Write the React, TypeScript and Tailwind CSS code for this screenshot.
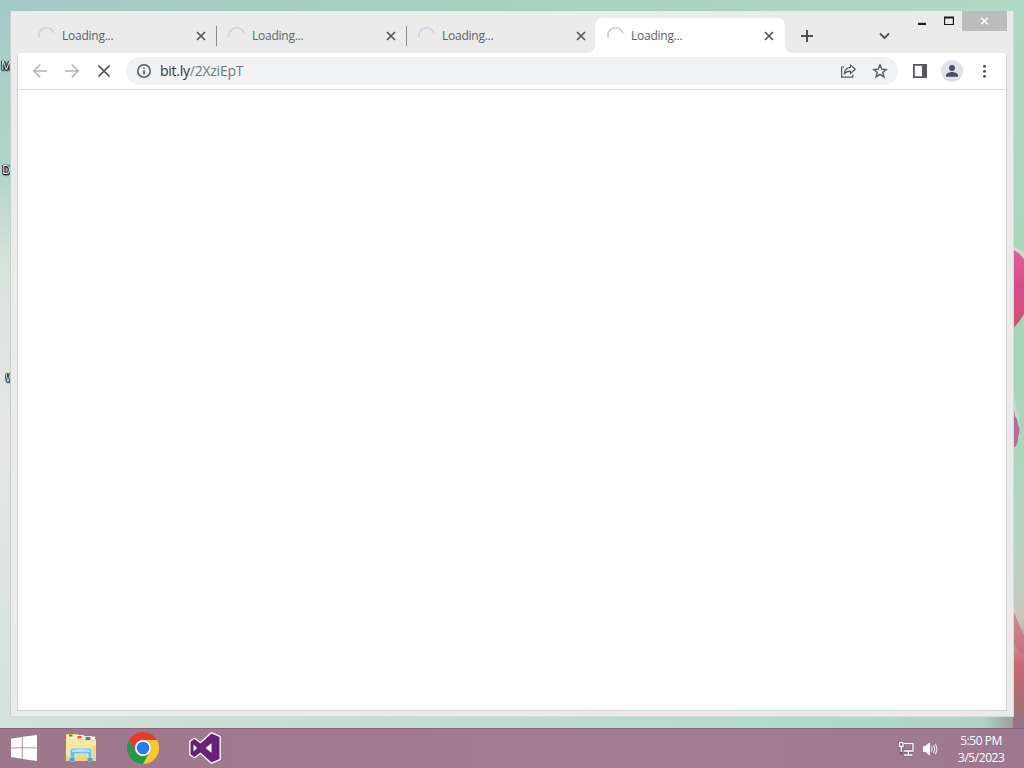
import React from "react";

function Spinner({ active = false }: { active?: boolean }) {
  return (
    <svg className="h-[18px] w-[18px] shrink-0" viewBox="0 0 18 18" fill="none">
      <path d="M1.3 10.8A7.6 7.6 0 0 1 15.8 6" stroke={active ? "#c9cdd5" : "#ccd6e6"} strokeWidth="1.7" />
    </svg>
  );
}

function Cross({ className, width = 1.6 }: { className: string; width?: number }) {
  return (
    <svg className={className} viewBox="0 0 10 10" fill="none" stroke="currentColor" strokeWidth={width}>
      <path d="M1 1 9 9M9 1 1 9" />
    </svg>
  );
}

function Tab({ active = false, divider = false }: { active?: boolean; divider?: boolean }) {
  return (
    <div
      className={
        active
          ? "relative flex h-[35px] w-[190px] shrink-0 items-center rounded-t-lg bg-white pl-[12px] pr-[11px]"
          : "relative flex h-[35px] w-[190px] shrink-0 items-center pl-[11px] pr-[11px]"
      }
    >
      {active && (
        <>
          <svg className="absolute -left-2 bottom-0 h-2 w-2" viewBox="0 0 8 8">
            <path d="M8 0v8H0a8 8 0 0 0 8-8" fill="#fff" />
          </svg>
          <svg className="absolute -right-2 bottom-0 h-2 w-2" viewBox="0 0 8 8">
            <path d="M0 0v8h8a8 8 0 0 1-8-8" fill="#fff" />
          </svg>
        </>
      )}
      <Spinner active={active} />
      <span className="ml-[6px] flex-1 text-[12px] leading-4 tracking-[-0.25px] text-[#616264]">Loading...</span>
      <Cross className="h-[10px] w-[10px] text-[#505255]" />
      {divider && <i className="absolute right-0 top-[8px] h-5 w-px bg-[#8b8b8c]" />}
    </div>
  );
}

function WindowButtons() {
  return (
    <div className="ml-auto flex h-5 items-start text-[#1b1b1b]">
      <svg className="h-5 w-[54px]" viewBox="0 0 54 20" fill="none">
        <path d="M10 12.9h8" stroke="currentColor" strokeWidth="2.2" />
        <path d="M36.6 6.5h8.8v7h-8.8z" stroke="currentColor" strokeWidth="1.2" />
        <path d="M36 6.5h10" stroke="currentColor" strokeWidth="2" />
      </svg>
      <div className="flex h-5 w-[45px] items-center justify-center bg-[#bcbcbc] text-white">
        <Cross className="h-2 w-[9px]" width={2} />
      </div>
    </div>
  );
}

function Toolbar() {
  return (
    <div className="flex h-[37px] items-center border-b border-[#dcdcdd] bg-white pl-[14px] pr-[14px] text-[#56585b]">
      <svg className="h-4 w-4" viewBox="0 0 16 16" fill="none" stroke="#b5b6b8" strokeWidth="1.7">
        <path d="M15 8H2M8.3 1.5 1.8 8l6.5 6.5" />
      </svg>
      <svg className="ml-4 h-4 w-4" viewBox="0 0 16 16" fill="none" stroke="#b5b6b8" strokeWidth="1.7">
        <path d="M1 8h13M7.7 1.5 14.2 8l-6.5 6.5" />
      </svg>
      <Cross className="ml-[17px] h-[14px] w-[14px]" width={1.2} />
      <div className="ml-[15px] flex h-7 w-[772px] items-center rounded-full bg-[#f1f2f3] pl-[11px] pr-[10px]">
        <svg className="h-[14px] w-[14px]" viewBox="0 0 14 14" fill="none" stroke="currentColor">
          <circle cx="7" cy="7" r="6.2" strokeWidth="1.5" />
          <path d="M7 6.2v4.3M7 3.3v1.5" strokeWidth="1.6" />
        </svg>
        <span className="ml-[9px] flex-1 text-[14px] leading-5 tracking-[-0.25px] text-[#75777a]">
          <span className="text-[#303235]">bit.ly</span>/2XziEpT
        </span>
        <svg className="h-4 w-4" viewBox="0 0 16 16" fill="none" stroke="currentColor" strokeWidth="1.2" strokeLinejoin="round">
          <path d="M4 4H1.6v10.2h11.2v-2.8" />
          <path d="M10.4 1.9 15.3 6.2l-4.9 4.3V8.1C7.6 8 5.8 8.8 4.3 10.9 4.6 7.3 6.7 4.8 10.4 4.4z" />
        </svg>
        <svg className="ml-4 h-4 w-4" viewBox="0 0 16 16" fill="none" stroke="currentColor" strokeWidth="1.4">
          <path d="m8 2 1.75 4.1 4.45.4-3.4 2.9 1.05 4.35L8 11.4l-3.85 2.35L5.2 9.4 1.8 6.5l4.45-.4z" />
        </svg>
      </div>
      <svg className="ml-[14px] h-[14px] w-4" viewBox="0 0 16 14">
        <path d="M1.9.9h12.2v12.2H1.9z" fill="none" stroke="currentColor" strokeWidth="1.8" />
        <path d="M10 0h5v14h-5z" fill="currentColor" />
      </svg>
      <svg className="ml-[13px] h-[22px] w-[22px]" viewBox="0 0 22 22">
        <circle cx="11" cy="11" r="11" fill="#e0e2eb" />
        <circle cx="11" cy="8" r="3" fill="#4b5068" />
        <path d="M5 16.8v-1.6c0-2.2 4-3.2 6-3.2s6 1 6 3.2v1.6z" fill="#4b5068" />
      </svg>
      <svg className="ml-[19px] h-[14px] w-[5px]" viewBox="0 0 5 14" fill="currentColor">
        <circle cx="2.5" cy="2.2" r="1.5" />
        <circle cx="2.5" cy="7.2" r="1.5" />
        <circle cx="2.5" cy="12.2" r="1.5" />
      </svg>
    </div>
  );
}

function Browser() {
  return (
    <div className="absolute left-[11px] top-[11px] flex h-[706px] w-[1003px] flex-col border-b border-r border-[#d7dad8] bg-[#ebebeb] shadow-[-1px_0_0_#c8d0cd]">
      <div className="flex h-[42px] pl-[16px] pr-[6px]">
        <div className="flex items-end">
          <Tab divider />
          <Tab divider />
          <Tab />
          <div className="-ml-[2px]">
            <Tab active />
          </div>
        </div>
        <svg className="ml-[16px] mt-[19px] h-3 w-3" viewBox="0 0 12 12" fill="none" stroke="#4c4e50" strokeWidth="2">
          <path d="M6 0v12M0 6h12" />
        </svg>
        <svg className="ml-[66px] mt-[21px] h-2 w-[11px]" viewBox="0 0 11 8" fill="none" stroke="#4f5153" strokeWidth="1.8">
          <path d="m1 1.5 4.5 4.5L10 1.5" />
        </svg>
        <WindowButtons />
      </div>
      <div className="ml-[6px] mr-[6px] flex h-[658px] flex-col border-b border-l border-r border-[#d2d3d3] bg-white">
        <Toolbar />
        <main className="flex-1 bg-white" />
      </div>
    </div>
  );
}

function Wallpaper() {
  return (
    <svg className="absolute inset-0 h-full w-full" viewBox="0 0 1024 728" preserveAspectRatio="none">
      <defs>
        <linearGradient id="top" x1="0" x2="1">
          <stop offset="0" stopColor="#a3cac6" />
          <stop offset=".45" stopColor="#a5d0be" />
          <stop offset="1" stopColor="#b0d9c6" />
        </linearGradient>
        <linearGradient id="left" x1="0" x2="0" y1="0" y2="1">
          <stop offset="0" stopColor="#a3cac6" />
          <stop offset=".23" stopColor="#b1d6c7" />
          <stop offset=".36" stopColor="#dbe3dd" />
          <stop offset=".6" stopColor="#e5e6e5" />
          <stop offset="1" stopColor="#d5e1dc" />
        </linearGradient>
        <linearGradient id="right" x1="0" x2="0" y1="0" y2="1">
          <stop offset="0" stopColor="#b0d9c6" />
          <stop offset=".5" stopColor="#a5d5b9" />
          <stop offset=".75" stopColor="#b8d4c4" />
          <stop offset=".85" stopColor="#c9c5bd" />
          <stop offset=".91" stopColor="#c96a75" />
          <stop offset=".96" stopColor="#aa6e70" />
          <stop offset="1" stopColor="#96748b" />
        </linearGradient>
        <linearGradient id="bottom" x1="0" x2="1">
          <stop offset="0" stopColor="#d3e1db" />
          <stop offset=".3" stopColor="#c8ded5" />
          <stop offset=".8" stopColor="#b0dbc9" />
          <stop offset=".97" stopColor="#b0d5c5" />
          <stop offset="1" stopColor="#a09c9c" />
        </linearGradient>
        <linearGradient id="petal" x1="0" x2="0" y1="0" y2="1">
          <stop offset="0" stopColor="#dc629c" />
          <stop offset=".45" stopColor="#d74c8b" />
          <stop offset="1" stopColor="#c9566f" />
        </linearGradient>
      </defs>
      <path d="M0 0h1024v12H0z" fill="url(#top)" />
      <path d="M0 11h12v717H0z" fill="url(#left)" />
      <path d="M1012 11h12v717h-12z" fill="url(#right)" />
      <path d="M11 716h1002v12H11z" fill="url(#bottom)" />
      <path d="M1013 246l11 6v8l-11-8z" fill="#cbdcd2" />
      <path d="M1013 250q6 2 11 9v55q-5 9-11 14z" fill="url(#petal)" />
      <path d="M1013 394l6 20v24l-6-25z" fill="#c0d9ca" />
      <path d="M1013 407l2 7v33h-2z" fill="#c98ba9" />
      <path d="M1014 416q3 0 4 8 3 6 0 13 0 9-4 10z" fill="#b0709a" />
      <path d="M1013 610q7 17 11 25v20q-7-3-11-15z" fill="#c46976" opacity=".65" />
    </svg>
  );
}

function DesktopLabel({ className, children }: { className: string; children: string }) {
  return (
    <span
      className={`absolute w-[11px] overflow-hidden text-[12px] leading-4 text-white [text-shadow:0_0_1px_#000,1px_0_1px_#000,-1px_0_1px_#000,0_1px_1px_#000,1px_1px_2px_#000] ${className}`}
    >
      {children}
    </span>
  );
}

function ExplorerIcon() {
  return (
    <svg className="h-[30px] w-[32px]" viewBox="0 0 32 30">
      <path d="M1 1h12l1 2h13v3h4v22H1z" fill="#efd581" />
      <path d="M2 2h17v5H2z" fill="#f9f0c4" />
      <path d="M4 1.5h3.5v2H4z" fill="#42975c" />
      <path d="M12.5 3h4v2.5h-4z" fill="#dc5945" />
      <path d="M18 3.5h12v3H18z" fill="#fdfaec" />
      <path d="M20.5 4h5v3h-5z" fill="#3c87bd" />
      <path d="M1 6h17l2 1.5h11V28H1z" fill="#f0d680" />
      <path d="M1 6h17l2 1.5h11V12L1 23z" fill="#f8e7a0" />
      <path d="M5 28V18q0-3 3-3h16q3 0 3 3v10h-4v-7H10v7z" fill="#74c0e3" stroke="#c9f0f8" />
      <path d="M7 17q9-2 18 0v2H7z" fill="#aee2f0" />
      <path d="M4.500 25h5v3.500h-5zm18 0h5v3.500h-5z" fill="#4da6cf" />
    </svg>
  );
}

function ChromeIcon() {
  return (
    <svg className="h-8 w-8" viewBox="0 0 48 48">
      <path d="M3.2 12A24 24 0 0 1 44.8 12H24a12 12 0 0 0-10.4 18z" fill="#e33b2e" />
      <path d="M3.2 12A24 24 0 0 0 24 48l10.4-18a12 12 0 0 1-20.8 0z" fill="#26984b" />
      <path d="M44.8 12A24 24 0 0 1 24 48l10.4-18A12 12 0 0 0 24 12z" fill="#fbc72e" />
      <circle cx="24" cy="24" r="12" fill="#fff" />
      <circle cx="24" cy="24" r="9.5" fill="#287de9" />
    </svg>
  );
}

function VisualStudioIcon() {
  return (
    <svg className="h-8 w-8" viewBox="0 0 32 32">
      <path
        d="M22.500 1.500 30.500 5v22l-8 3.500L11.500 20.500 5.500 25 1.500 22.500V9.500L5.500 7l6 4.500z"
        fill="#682176"
        stroke="#fff"
        strokeWidth="2.6"
        strokeLinejoin="round"
      />
      <path d="M22.500 1.500 30.500 5v22l-8 3.500L11.500 20.500 5.500 25 1.500 22.500V9.500L5.500 7l6 4.500z" fill="#682176" />
      <path d="M4.500 12.500v7L8.200 16zM16.500 16l6 4.800v-9.600z" fill="#fff" />
    </svg>
  );
}

function Taskbar() {
  return (
    <div className="flex h-10 items-center border-t border-[#87647b] bg-[linear-gradient(90deg,#9d788a_0%,#a17a91_35%,#a27d91_70%,#9d7890_100%)] pb-px pl-[11px] pr-[20px] text-white">
      <svg className="h-[26px] w-[26px]" viewBox="0 0 26 26" fill="#fff">
        <path d="M0 3.700 10.800 2v10.400H0zM11.600 1.800 26 0v12.400H11.600zM0 13.300h10.800v10.400L0 22zM11.600 13.300H26V26l-14.400-2.100z" />
      </svg>
      <div className="ml-[28px] flex items-center gap-[30px]">
        <ExplorerIcon />
        <ChromeIcon />
        <VisualStudioIcon />
      </div>
      <div className="ml-auto flex items-center pt-px">
        <svg className="h-4 w-4" viewBox="0 0 16 16" fill="none">
          <g stroke="#5c4058" strokeWidth="3" opacity=".55">
            <path d="M6 2.500h9v7.500H5.500M10.300 10v4M6 14h8.500M1.500 1.500h3.500v4H1.500zM3.300 5.500v8" />
          </g>
          <g stroke="#fff" strokeWidth="1.300">
            <path d="M6 2.500h9v7.500H5.500M10.300 10v4M6 14h8.500" />
            <path d="M1.500 1.500h3.500v4H1.500zM3.300 5.500V11" />
          </g>
        </svg>
        <svg className="ml-[8px] h-4 w-4" viewBox="0 0 16 16" fill="none" stroke="#fff">
          <path d="M1.500 5.500h2L7.500 2v12l-4-3.500h-2z" fill="#fff" />
          <path d="M9.400 5.500q1.600 2.500 0 5M11.500 4q2.500 4 0 8M13.500 2.800q3 5.200 0 10.400" strokeWidth=".95" />
        </svg>
        <div className="ml-[20px] w-[46px] whitespace-nowrap text-center text-[12px] leading-[17px] tracking-[-0.45px]">
          <div>5:50 PM</div>
          <div>3/5/2023</div>
        </div>
      </div>
    </div>
  );
}

export default function App() {
  return (
    <div className="flex h-[768px] w-[1024px] flex-col overflow-hidden font-['Open_Sans','Noto_Sans',sans-serif]">
      <div className="relative h-[728px]">
        <Wallpaper />
        <DesktopLabel className="left-[1px] top-[58px]">M</DesktopLabel>
        <DesktopLabel className="left-[2px] top-[162px]">D</DesktopLabel>
        <DesktopLabel className="left-[5px] top-[370px]">W</DesktopLabel>
        <Browser />
      </div>
      <Taskbar />
    </div>
  );
}
